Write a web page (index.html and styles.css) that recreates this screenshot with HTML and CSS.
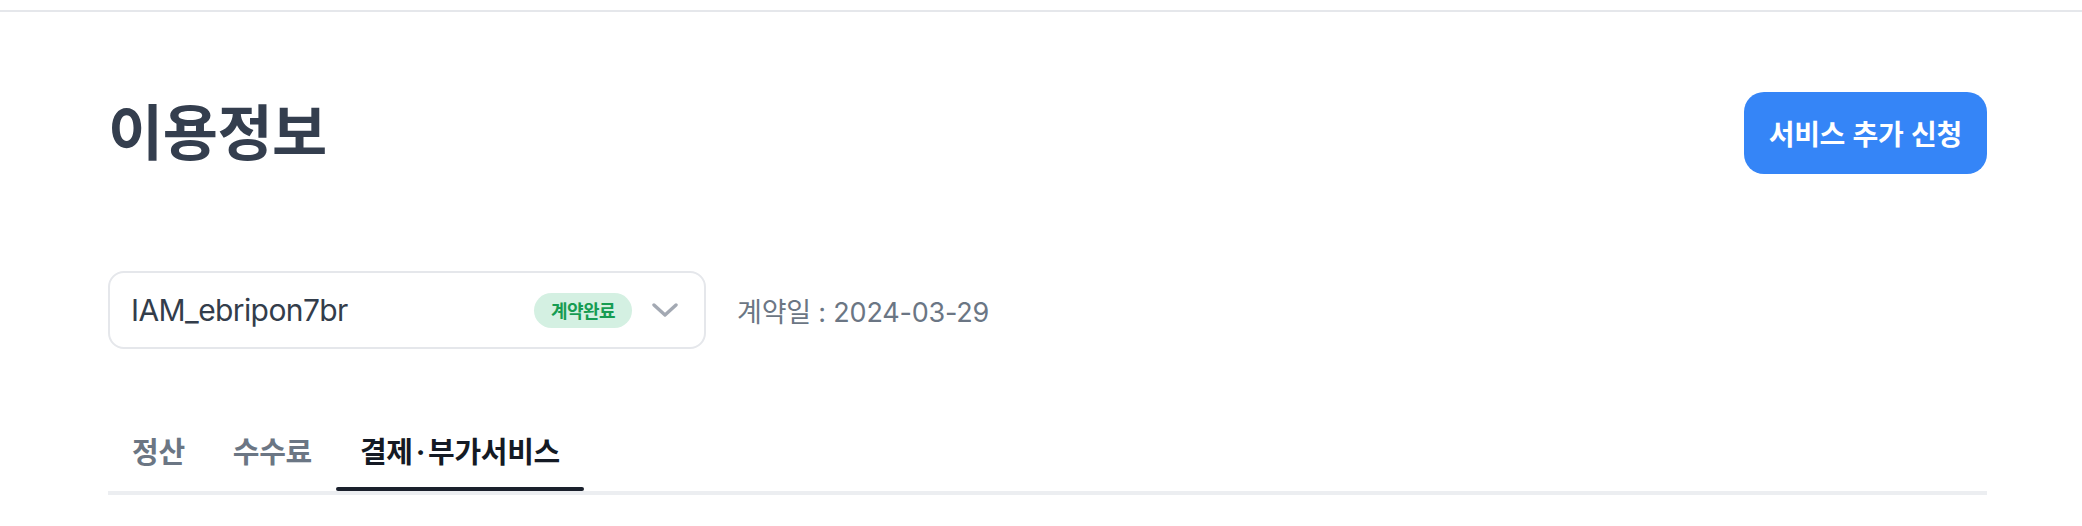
FILE: index.html
```html
<!DOCTYPE html>
<html lang="ko">
<head>
<meta charset="utf-8">
<title>이용정보</title>
<link rel="stylesheet" href="styles.css">
</head>
<body>
<div class="topbar"></div>
<main class="page">
  <header class="page-head">
    <h1 class="page-title">이용정보</h1>
    <button class="btn-primary" type="button">서비스 추가 신청</button>
  </header>

  <section class="contract-row">
    <div class="select">
      <span class="select-value">IAM_ebripon7br</span>
      <span class="badge">계약완료</span>
      <svg class="chevron" width="26" height="14" viewBox="0 0 26 14" aria-hidden="true">
        <path d="M2 2 L13 12 L24 2" fill="none" stroke="#a3a9b3" stroke-width="3.4" stroke-linecap="round" stroke-linejoin="round"/>
      </svg>
    </div>
    <span class="contract-date">계약일 : 2024-03-29</span>
  </section>

  <nav class="tabs">
    <a class="tab">정산</a>
    <a class="tab">수수료</a>
    <a class="tab is-active">결제<span class="dot">·</span>부가서비스</a>
  </nav>
</main>
</body>
</html>
```

FILE: styles.css
```css
* {
  box-sizing: border-box;
}

html, body {
  margin: 0;
  padding: 0;
  background: #ffffff;
}

body {
  font-family: Inter, "Noto Sans CJK KR", sans-serif;
  color: #333d4b;
}

.topbar {
  height: 12px;
  border-bottom: 2px solid #e5e7eb;
}

.page {
  padding: 80px 95px 0 108px;
}

.page-head {
  display: flex;
  align-items: center;
  justify-content: space-between;
  height: 82px;
}

.page-title {
  margin: 0;
  font-size: 60px;
  line-height: 82px;
  font-weight: 700;
  color: #343e4e;
  letter-spacing: -0.5px;
}

.btn-primary {
  height: 82px;
  padding: 0 25px;
  border: none;
  border-radius: 20px;
  background: #3585f7;
  color: #ffffff;
  font-family: "Noto Sans CJK KR", sans-serif;
  font-size: 28px;
  font-weight: 700;
  letter-spacing: -0.3px;
}

.contract-row {
  display: flex;
  align-items: center;
  gap: 31px;
  margin-top: 97px;
}

.select {
  display: flex;
  align-items: center;
  width: 598px;
  height: 78px;
  padding: 0 26px 0 21px;
  border: 2px solid #e5e7eb;
  border-radius: 16px;
}

.select-value {
  flex: 1;
  font-size: 30px;
  letter-spacing: -0.6px;
  color: #333d4b;
}

.badge {
  display: inline-flex;
  align-items: center;
  justify-content: center;
  width: 98px;
  height: 35px;
  border-radius: 18px;
  background: #d4f0e2;
  color: #179c52;
  font-size: 18px;
  font-weight: 700;
  letter-spacing: -0.5px;
}

.chevron {
  margin-left: 20px;
}

.contract-date {
  font-size: 27px;
  color: #6b7684;
  letter-spacing: -0.2px;
}

.tabs {
  display: flex;
  margin-top: 80px;
  border-bottom: 4px solid #eceef1;
}

.tab {
  position: relative;
  padding: 6px 24px 20px;
  font-size: 29px;
  line-height: 36px;
  font-weight: 700;
  color: #6b7684;
  letter-spacing: -0.3px;
}

.tab .dot {
  padding: 0 3px;
}

.tab.is-active {
  color: #141a24;
}

.tab.is-active::after {
  content: "";
  position: absolute;
  left: 0;
  right: 0;
  bottom: 0;
  height: 4px;
  border-radius: 3px;
  background: #1a202c;
}
```
